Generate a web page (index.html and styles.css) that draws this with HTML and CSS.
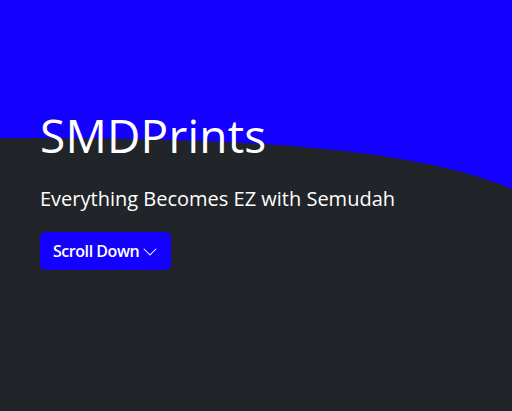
FILE: index.html
```html
<!DOCTYPE html>
<html>
<head>
<meta charset="UTF-8">
<title>SMDPrints</title>
<link rel="stylesheet" href="styles.css">
</head>
<body>

<section class="hero">
    <svg class="hero-wave" viewBox="0 0 512 411" preserveAspectRatio="none" aria-hidden="true">
        <path d="M0,138 C200,138 400,142 512,189 L512,411 L0,411 Z" fill="#212529"/>
    </svg>
    <div class="hero-content">
        <h1 class="hero-title">SMDPrints</h1>
        <p class="hero-lead">Everything Becomes EZ with Semudah</p>
        <a class="btn" href="#about">Scroll Down
            <svg class="btn-icon" viewBox="0 0 16 16" width="16" height="16" fill="currentColor">
                <path d="M1.646 4.646a.5.5 0 0 1 .708 0L8 10.293l5.646-5.647a.5.5 0 0 1 .708.708l-6 6a.5.5 0 0 1-.708 0l-6-6a.5.5 0 0 1 0-.708z"/>
            </svg>
        </a>
    </div>
</section>

</body>
</html>
```
FILE: styles.css
```css
html, body {
    margin: 0; padding: 0;
    width: 100%; height: 100%;
    font-family: "Open Sans", "Liberation Sans", sans-serif;
    background: #212529; color: #FFF;
}

.hero {
    position: relative; overflow: hidden;
    height: 100%;
    background: #1400FF;
}
    .hero-wave {
        position: absolute; left: 0; top: 0;
        width: 100%; height: 100%; display: block;
    }
    .hero-content {
        position: relative; /* above the wave */
        padding: 108px 40px 0 40px;
    }

.hero-title {
    margin: 0 0 21px 0;
    font-size: 46px; line-height: 55px; font-weight: 400;
    letter-spacing: 0.2px;
}
.hero-lead {
    margin: 0 0 18px 0;
    font-size: 20px; line-height: 30px; font-weight: 400;
}

.btn {
    display: inline-flex; align-items: center; gap: 3px;
    padding: 6px 12px;
    border: 1px solid #1400FF; border-radius: 5px;
    background: #1400FF; color: #FFF;
    font-size: 16px; line-height: 24px; font-weight: 600;
    letter-spacing: -0.45px;
    text-decoration: none;
}
    .btn-icon { width: 16px; height: 16px; margin-top: 1px; }
```
